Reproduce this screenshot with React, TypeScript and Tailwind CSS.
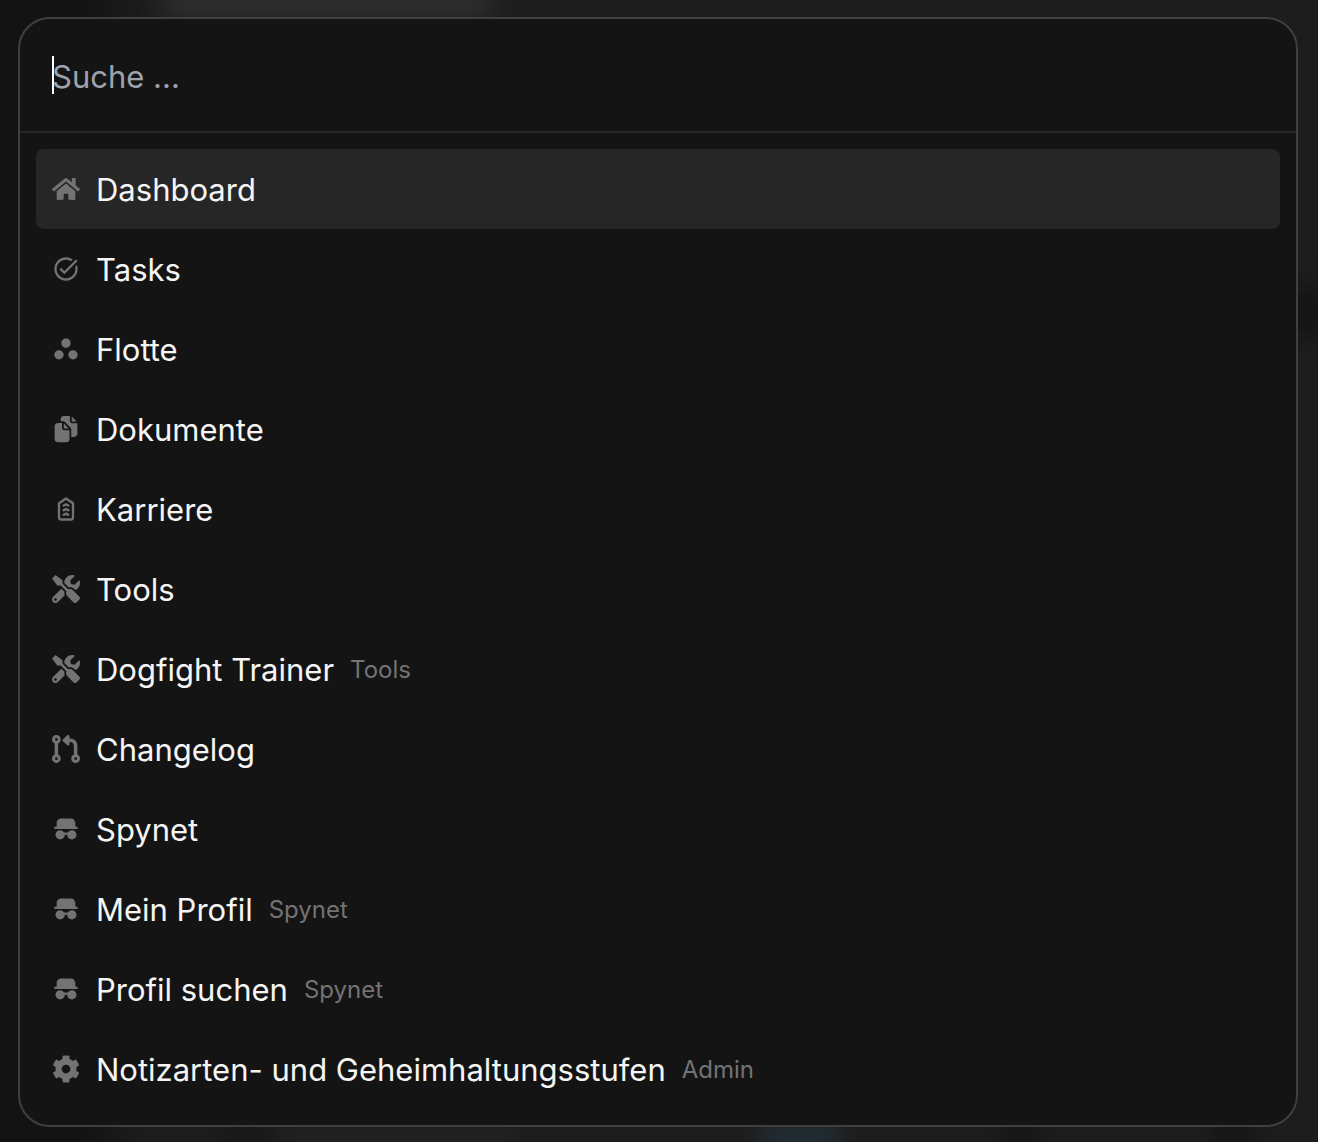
import { useState } from "react";
import type { IconType } from "react-icons";
import { FaCog, FaHome, FaTools } from "react-icons/fa";
import { FaCodePullRequest } from "react-icons/fa6";
import { IoDocuments } from "react-icons/io5";
import { MdTaskAlt, MdWorkspaces } from "react-icons/md";
import { RiSpyFill } from "react-icons/ri";
import { TbMilitaryRank } from "react-icons/tb";

type Command = { label: string; hint?: string; icon: IconType };

const commands: Command[] = [
  { label: "Dashboard", icon: FaHome },
  { label: "Tasks", icon: MdTaskAlt },
  { label: "Flotte", icon: MdWorkspaces },
  { label: "Dokumente", icon: IoDocuments },
  { label: "Karriere", icon: TbMilitaryRank },
  { label: "Tools", icon: FaTools },
  { label: "Dogfight Trainer", hint: "Tools", icon: FaTools },
  { label: "Changelog", icon: FaCodePullRequest },
  { label: "Spynet", icon: RiSpyFill },
  { label: "Mein Profil", hint: "Spynet", icon: RiSpyFill },
  { label: "Profil suchen", hint: "Spynet", icon: RiSpyFill },
  { label: "Notizarten- und Geheimhaltungsstufen", hint: "Admin", icon: FaCog },
];

function Backdrop() {
  return (
    <div aria-hidden="true" className="absolute inset-0 overflow-hidden bg-[linear-gradient(90deg,#131313_80px,#1d1d1d_150px)]">
      <div className="absolute -top-4 left-40 h-9 w-84 rounded-full bg-[#2e2e2e] blur-md" />
      <div className="absolute top-72 -right-6 h-12 w-20 bg-[#151515] blur-md" />
      <div className="absolute bottom-0 left-56 h-5 w-10 bg-[#151515] blur-md" />
      <div className="absolute -bottom-1 left-72 h-5 w-56 bg-[#262525] blur-md" />
      <div className="absolute -bottom-2 left-[760px] h-6 w-20 bg-[#22333b] blur-md" />
      <div className="absolute bottom-0 left-[1000px] h-5 w-10 bg-[#131313] blur-md" />
      <div className="absolute right-16 bottom-0 h-5 w-10 bg-[#111111] blur-md" />
    </div>
  );
}

function CommandRow({ command, active, onActivate }: { command: Command; active: boolean; onActivate: () => void }) {
  const Icon = command.icon;
  return (
    <li>
      <button
        type="button"
        onMouseEnter={onActivate}
        onFocus={onActivate}
        className={`flex h-20 w-full items-center gap-4 rounded-lg px-4 text-left ${active ? "bg-[#262626]" : ""}`}
      >
        <Icon className="size-7 shrink-0 text-[#737373]" />
        <span className="pt-0.5 text-[31px] leading-10 text-[#f5f5f5]">{command.label}</span>
        {command.hint && <span className="pt-0.5 text-2xl leading-8 text-[#737373]">{command.hint}</span>}
      </button>
    </li>
  );
}

export default function App() {
  const [query, setQuery] = useState("");
  const [active, setActive] = useState("Dashboard");
  const visible = commands.filter((c) => c.label.toLowerCase().includes(query.toLowerCase()));

  return (
    <div className="relative min-h-screen bg-[#131313] pt-[17px] pr-5 pb-[15px] pl-[18px] font-['Inter',sans-serif]">
      <Backdrop />
      <main className="relative overflow-hidden rounded-[32px] border-2 border-[#404040] bg-[#141414]">
        <div className="relative flex h-[114px] items-center border-b-2 border-[#262626] px-8">
          {query === "" && <span aria-hidden="true" className="absolute left-8 h-[38px] w-0.5 bg-white" />}
          <input
            type="text"
            aria-label="Suche"
            placeholder="Suche ..."
            value={query}
            onChange={(e) => setQuery(e.target.value)}
            className="h-12 w-full bg-transparent pt-0.5 text-[31px] text-[#f5f5f5] outline-none placeholder:text-[#9ca3af]"
          />
        </div>
        <ul className="p-4">
          {visible.map((c) => (
            <CommandRow key={c.label} command={c} active={c.label === active} onActivate={() => setActive(c.label)} />
          ))}
        </ul>
      </main>
    </div>
  );
}
